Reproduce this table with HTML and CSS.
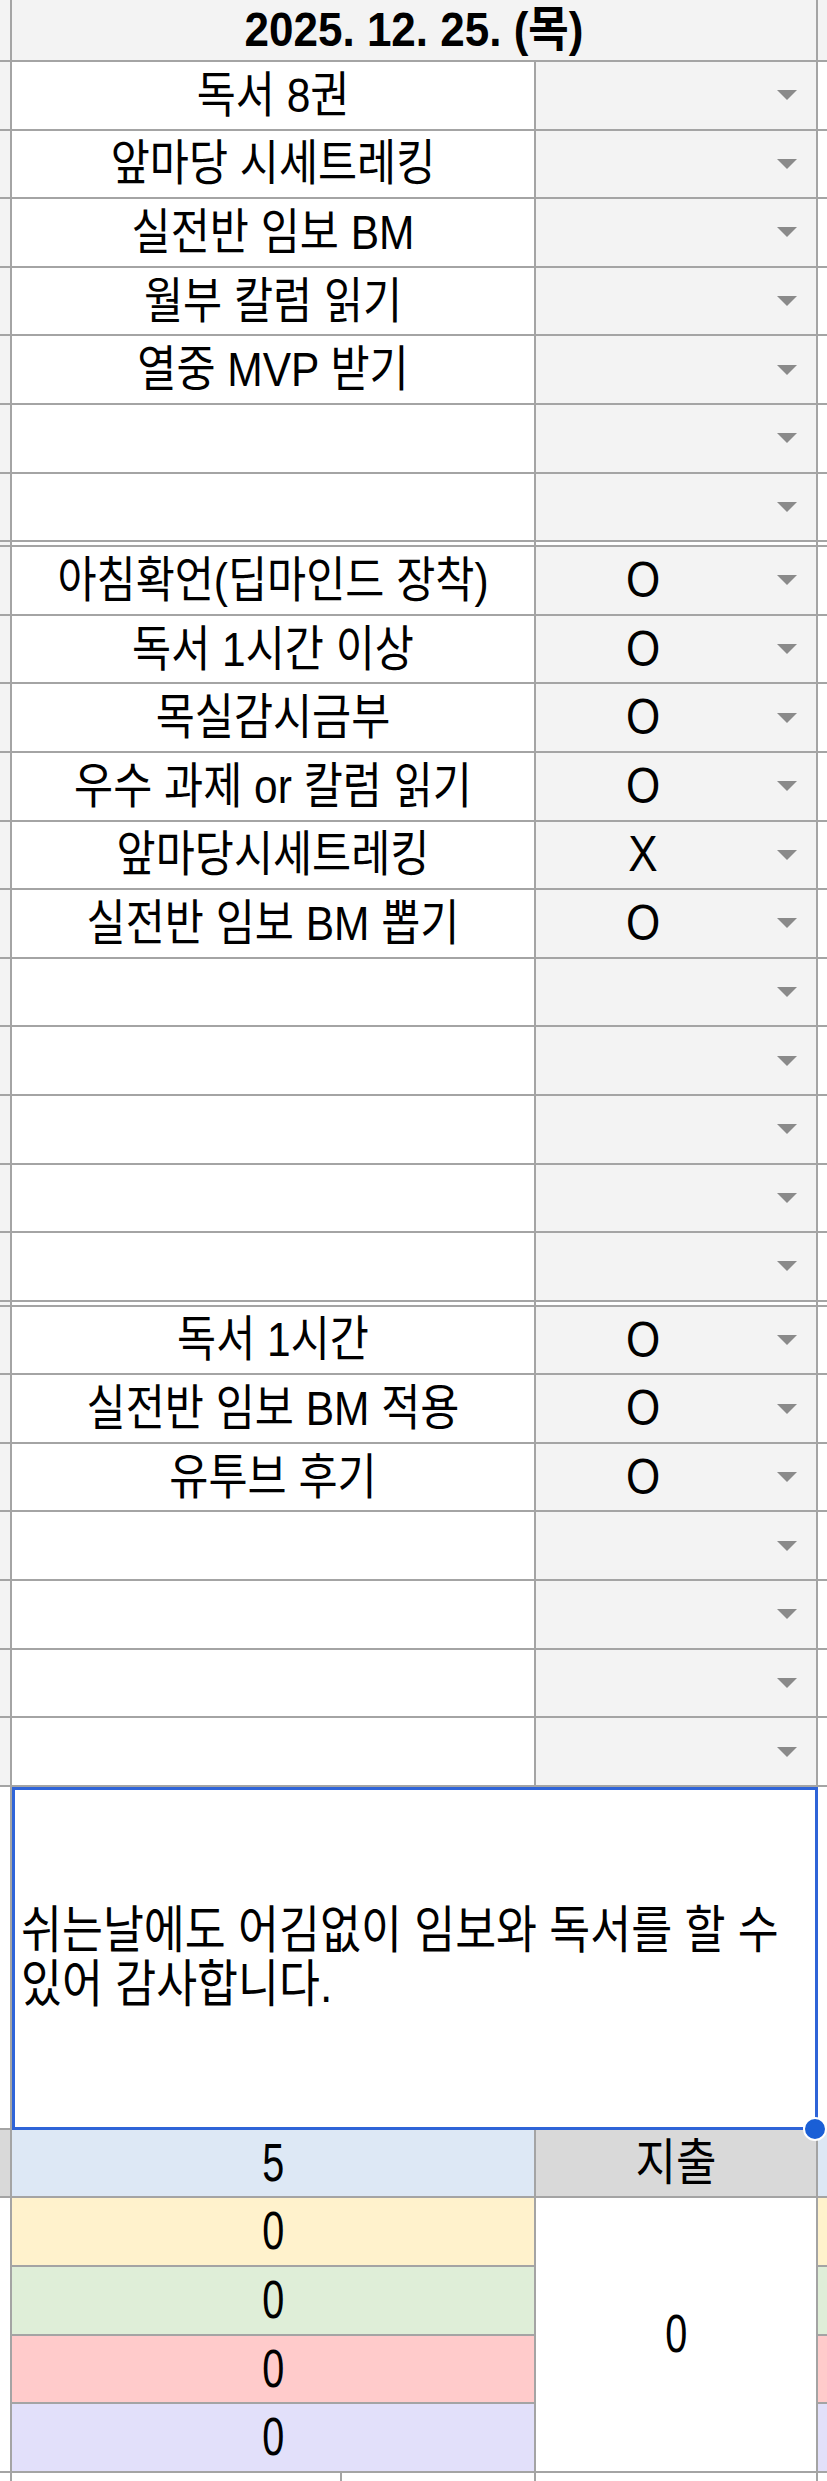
FILE: index.html
```html
<!DOCTYPE html>
<html lang="ko">
<head>
<meta charset="utf-8">
<title>2025. 12. 25.</title>
<link rel="stylesheet" href="styles.css">
</head>
<body>
<div class="sheet">
  <div class="row head">
    <div class="strip"></div>
    <div class="title"><span class="t">2025. 12. 25. (목)</span></div>
    <div class="rstrip"></div>
  </div>

  <div class="section">
    <div class="row"><div class="strip"></div><div class="a"><span class="t">독서 8권</span></div><div class="b"><span class="val"></span><span class="arrow"></span></div><div class="rstrip"></div></div>
    <div class="row"><div class="strip"></div><div class="a"><span class="t">앞마당 시세트레킹</span></div><div class="b"><span class="val"></span><span class="arrow"></span></div><div class="rstrip"></div></div>
    <div class="row"><div class="strip"></div><div class="a"><span class="t">실전반 임보 BM</span></div><div class="b"><span class="val"></span><span class="arrow"></span></div><div class="rstrip"></div></div>
    <div class="row"><div class="strip"></div><div class="a"><span class="t">월부 칼럼 읽기</span></div><div class="b"><span class="val"></span><span class="arrow"></span></div><div class="rstrip"></div></div>
    <div class="row"><div class="strip"></div><div class="a"><span class="t">열중 MVP 받기</span></div><div class="b"><span class="val"></span><span class="arrow"></span></div><div class="rstrip"></div></div>
    <div class="row"><div class="strip"></div><div class="a"></div><div class="b"><span class="val"></span><span class="arrow"></span></div><div class="rstrip"></div></div>
    <div class="row"><div class="strip"></div><div class="a"></div><div class="b"><span class="val"></span><span class="arrow"></span></div><div class="rstrip"></div></div>
  </div>

  <div class="sep"><div class="strip"></div><div class="a"></div><div class="b"></div><div class="rstrip"></div></div>

  <div class="section">
    <div class="row"><div class="strip"></div><div class="a"><span class="t">아침확언(딥마인드 장착)</span></div><div class="b"><span class="val"><span class="t">O</span></span><span class="arrow"></span></div><div class="rstrip"></div></div>
    <div class="row"><div class="strip"></div><div class="a"><span class="t">독서 1시간 이상</span></div><div class="b"><span class="val"><span class="t">O</span></span><span class="arrow"></span></div><div class="rstrip"></div></div>
    <div class="row"><div class="strip"></div><div class="a"><span class="t">목실감시금부</span></div><div class="b"><span class="val"><span class="t">O</span></span><span class="arrow"></span></div><div class="rstrip"></div></div>
    <div class="row"><div class="strip"></div><div class="a"><span class="t">우수 과제 or 칼럼 읽기</span></div><div class="b"><span class="val"><span class="t">O</span></span><span class="arrow"></span></div><div class="rstrip"></div></div>
    <div class="row"><div class="strip"></div><div class="a"><span class="t">앞마당시세트레킹</span></div><div class="b"><span class="val"><span class="t">X</span></span><span class="arrow"></span></div><div class="rstrip"></div></div>
    <div class="row"><div class="strip"></div><div class="a"><span class="t">실전반 임보 BM 뽑기</span></div><div class="b"><span class="val"><span class="t">O</span></span><span class="arrow"></span></div><div class="rstrip"></div></div>
    <div class="row"><div class="strip"></div><div class="a"></div><div class="b"><span class="val"></span><span class="arrow"></span></div><div class="rstrip"></div></div>
    <div class="row"><div class="strip"></div><div class="a"></div><div class="b"><span class="val"></span><span class="arrow"></span></div><div class="rstrip"></div></div>
    <div class="row"><div class="strip"></div><div class="a"></div><div class="b"><span class="val"></span><span class="arrow"></span></div><div class="rstrip"></div></div>
    <div class="row"><div class="strip"></div><div class="a"></div><div class="b"><span class="val"></span><span class="arrow"></span></div><div class="rstrip"></div></div>
    <div class="row"><div class="strip"></div><div class="a"></div><div class="b"><span class="val"></span><span class="arrow"></span></div><div class="rstrip"></div></div>
  </div>

  <div class="sep"><div class="strip"></div><div class="a"></div><div class="b"></div><div class="rstrip"></div></div>

  <div class="section">
    <div class="row"><div class="strip"></div><div class="a"><span class="t">독서 1시간</span></div><div class="b"><span class="val"><span class="t">O</span></span><span class="arrow"></span></div><div class="rstrip"></div></div>
    <div class="row"><div class="strip"></div><div class="a"><span class="t">실전반 임보 BM 적용</span></div><div class="b"><span class="val"><span class="t">O</span></span><span class="arrow"></span></div><div class="rstrip"></div></div>
    <div class="row"><div class="strip"></div><div class="a"><span class="t">유투브 후기</span></div><div class="b"><span class="val"><span class="t">O</span></span><span class="arrow"></span></div><div class="rstrip"></div></div>
    <div class="row"><div class="strip"></div><div class="a"></div><div class="b"><span class="val"></span><span class="arrow"></span></div><div class="rstrip"></div></div>
    <div class="row"><div class="strip"></div><div class="a"></div><div class="b"><span class="val"></span><span class="arrow"></span></div><div class="rstrip"></div></div>
    <div class="row"><div class="strip"></div><div class="a"></div><div class="b"><span class="val"></span><span class="arrow"></span></div><div class="rstrip"></div></div>
    <div class="row"><div class="strip"></div><div class="a"></div><div class="b"><span class="val"></span><span class="arrow"></span></div><div class="rstrip"></div></div>
  </div>

  <div class="bottom">
    <div class="g g-strip note-strip"></div>
    <div class="note"><p class="note-text">쉬는날에도 어김없이 임보와 독서를 할 수 있어 감사합니다.</p></div>
    <div class="g note-rstrip"></div>

    <div class="g g-strip gray"></div>
    <div class="g g-a blue"><span class="d">5</span></div>
    <div class="g g-b gray"><span class="t">지출</span></div>
    <div class="g g-r blue"></div>

    <div class="g g-strip merge4"></div>
    <div class="g g-a yellow"><span class="d">0</span></div>
    <div class="g g-b merge4"><span class="d">0</span></div>
    <div class="g g-r yellow"></div>

    <div class="g g-a green"><span class="d">0</span></div>
    <div class="g g-r green"></div>

    <div class="g g-a red"><span class="d">0</span></div>
    <div class="g g-r red"></div>

    <div class="g g-a purple"><span class="d">0</span></div>
    <div class="g g-r purple"></div>

    <div class="g g-strip"></div>
    <div class="g g-a split"><div class="half"></div><div class="half2"></div></div>
    <div class="g g-b"></div>
    <div class="g g-r"></div>

    <div class="handle"></div>
  </div>
</div>
</body>
</html>
```

FILE: styles.css
```css
* { box-sizing: border-box; }

html, body {
  margin: 0;
  padding: 0;
  background: #ffffff;
}

body {
  font-family: "Liberation Sans", "Noto Sans CJK KR", sans-serif;
  color: #000000;
  width: 827px;
  height: 2481px;
  overflow: hidden;
}

.sheet {
  width: 827px;
}

.t {
  display: inline-block;
  transform: scaleY(1.14);
}

.d {
  display: inline-block;
  transform: scaleY(1.2) scaleX(0.9);
}

.row {
  display: flex;
  height: 68.6px;
  border-bottom: 2px solid #a4a4a4;
}

.row.head {
  height: 62px;
  background: #f3f3f3;
}

.strip {
  width: 12px;
  flex: none;
  border-right: 2px solid #a4a4a4;
  background: #f3f3f3;
}

.title {
  width: 806px;
  flex: none;
  border-right: 2px solid #a4a4a4;
  display: flex;
  align-items: center;
  justify-content: center;
  font-weight: bold;
  font-size: 44px;
  line-height: 1.2;
  white-space: nowrap;
}

.title .t {
  transform: scaleY(1.1);
}

.a {
  width: 524px;
  flex: none;
  border-right: 2px solid #a4a4a4;
  background: #ffffff;
  display: flex;
  align-items: center;
  justify-content: center;
  font-size: 42.5px;
  line-height: 1.2;
  white-space: nowrap;
}

.b {
  width: 282px;
  flex: none;
  border-right: 2px solid #a4a4a4;
  background: #f3f3f3;
  display: flex;
  align-items: center;
  padding-right: 19px;
}

.val {
  flex: 1;
  text-align: center;
  font-size: 44px;
  line-height: 1.2;
}

.arrow {
  flex: none;
  width: 0;
  height: 0;
  margin-left: 27px;
  border-left: 10px solid transparent;
  border-right: 10px solid transparent;
  border-top: 10px solid #8a8a8a;
}

.rstrip {
  flex: 1;
  background: #ffffff;
}

.row.head .rstrip {
  background: #f3f3f3;
}

.sep {
  display: flex;
  height: 5px;
  border-bottom: 2px solid #a4a4a4;
}

.sep .a,
.sep .b {
  background: #ffffff;
}

/* bottom grid */
.bottom {
  position: relative;
  display: grid;
  grid-template-columns: 12px 524px 282px 9px;
  grid-template-rows: 343px 68.6px 68.6px 68.6px 68.6px 68.6px 30px;
}

.g {
  border-right: 2px solid #a4a4a4;
  border-bottom: 2px solid #a4a4a4;
  background: #ffffff;
  display: flex;
  align-items: center;
  justify-content: center;
  font-size: 44px;
  line-height: 1.2;
}

.g-r {
  border-right: none;
}

.note-strip {
  grid-column: 1;
  grid-row: 1;
}

.note {
  grid-column: 2 / 4;
  grid-row: 1;
  border: 3px solid #2f64d8;
  background: #ffffff;
  display: flex;
  align-items: center;
  padding: 0 6px;
  font-size: 44.5px;
  word-break: keep-all;
}

.note-text {
  margin: 0;
  line-height: 48px;
  transform: scaleY(1.14);
}

.note-rstrip {
  grid-column: 4;
  grid-row: 1;
  border-right: none;
}

.merge4 {
  grid-row: span 4;
}

.gray { background: #d9d9d9; }
.blue { background: #dde8f5; }
.yellow { background: #fff2cc; }
.green { background: #dfeed8; }
.red { background: #ffcbcb; }
.purple { background: #e2e0fa; }

.split {
  justify-content: flex-start;
  align-items: stretch;
}

.half {
  width: 330px;
  border-right: 2px solid #a4a4a4;
}

.handle {
  position: absolute;
  left: 803px;
  top: 330px;
  width: 24px;
  height: 24px;
  border-radius: 50%;
  background: #1a5fd6;
  border: 2px solid #ffffff;
}
```
